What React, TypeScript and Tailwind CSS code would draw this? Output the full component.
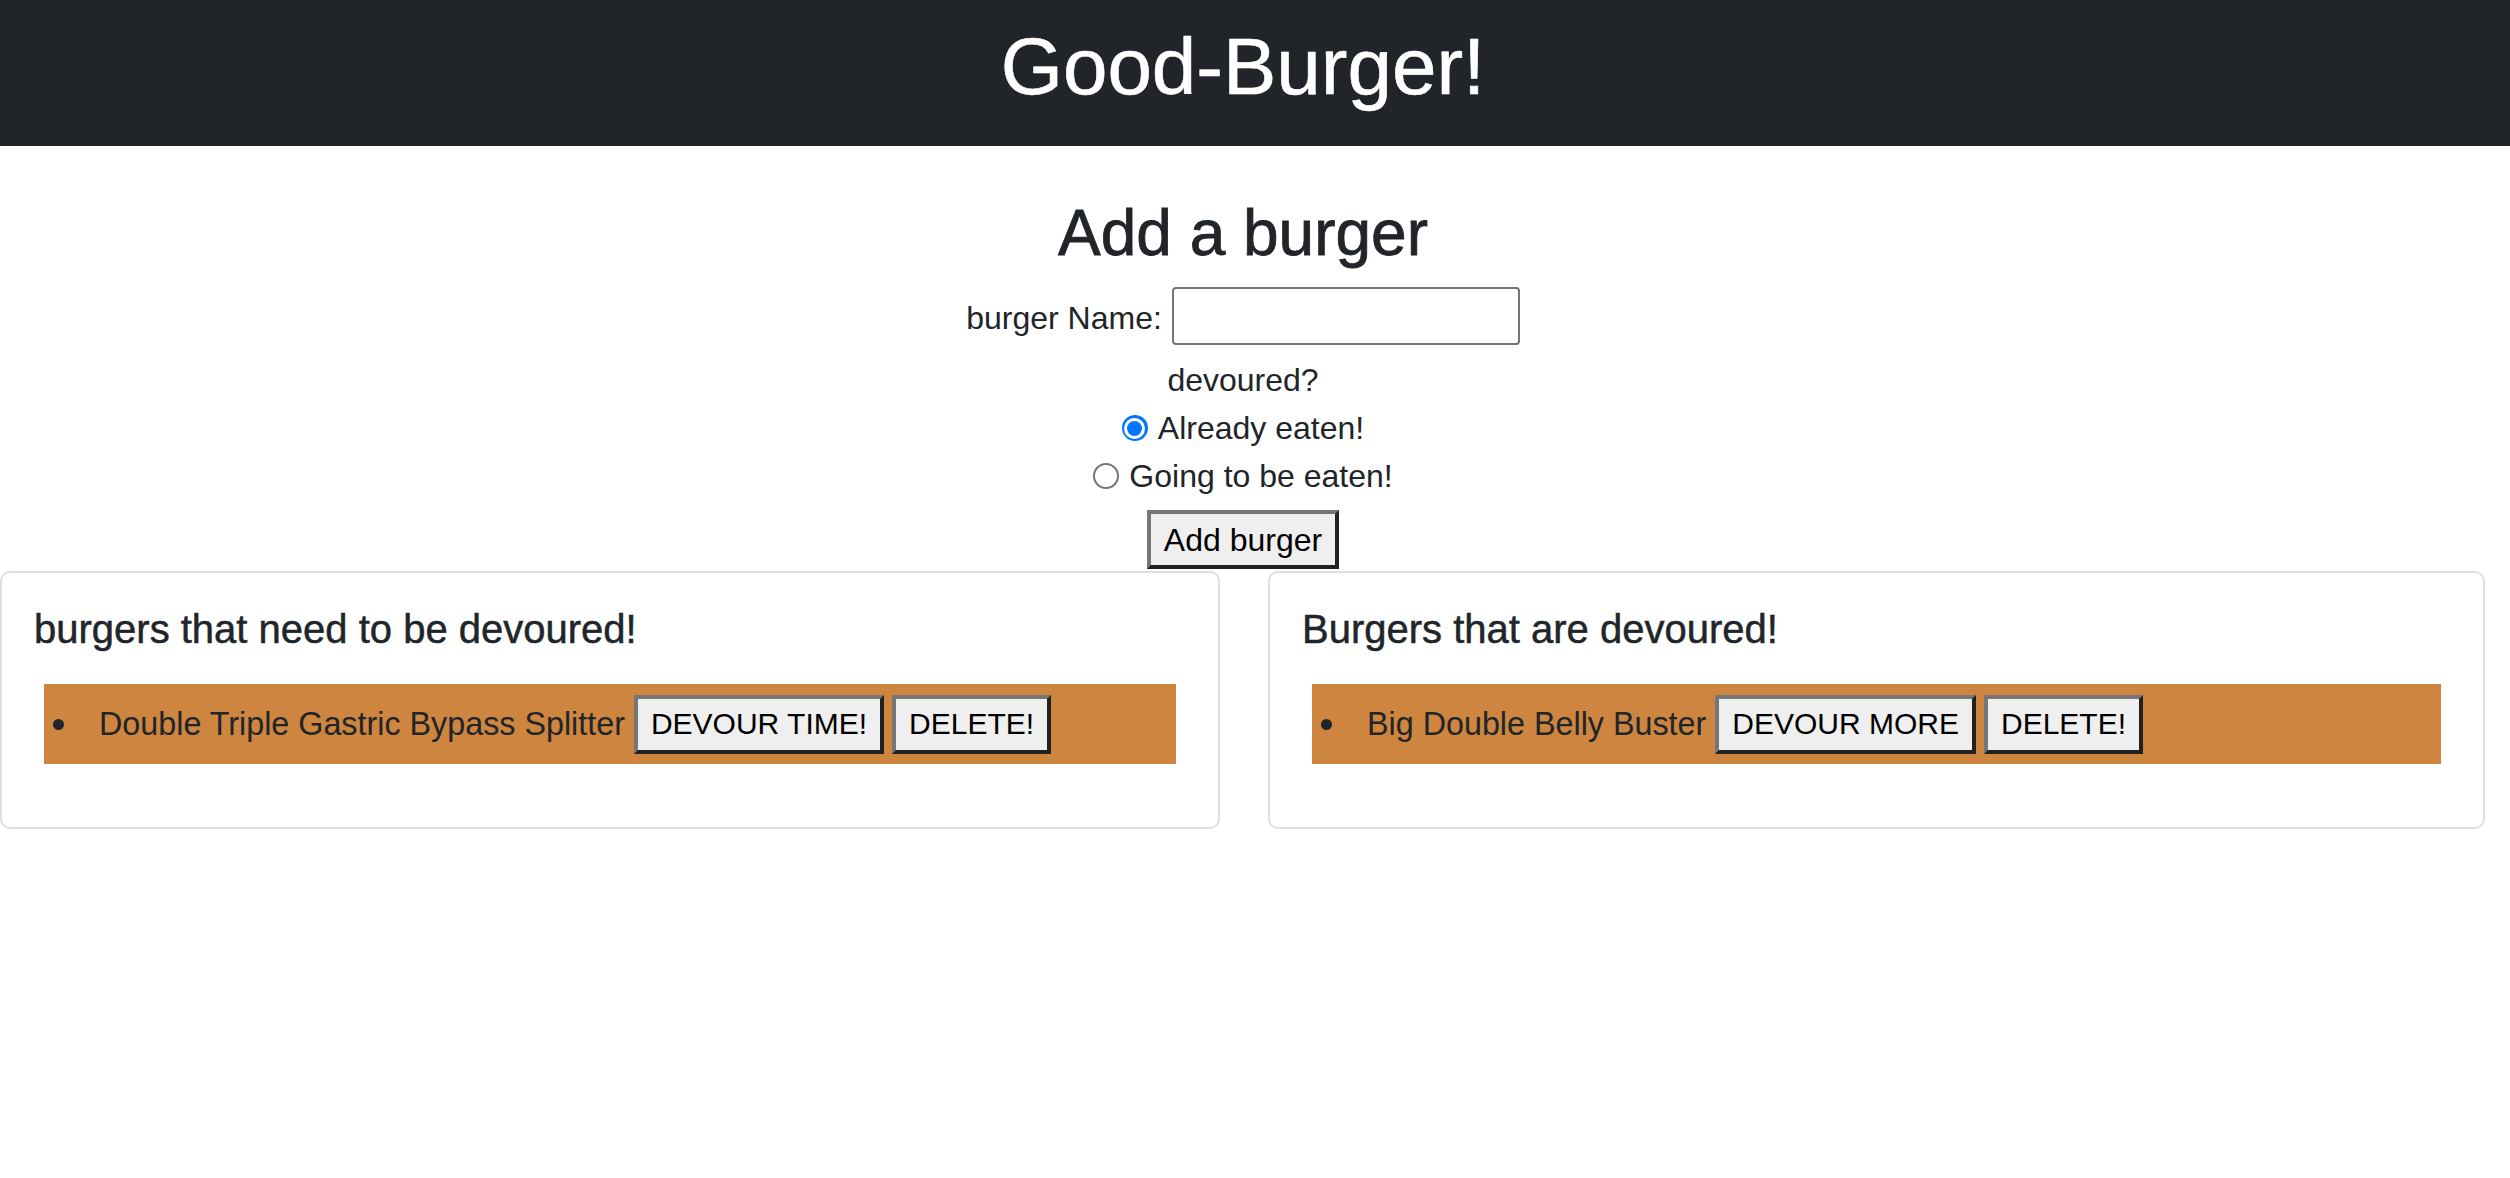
import React from "react";

function Btn({ children, className = "", big = false }: { children: React.ReactNode; className?: string; big?: boolean }) {
  return (
    <button
      type="button"
      className={
        (big ? "text-[32px] " : "text-[30px] ") +
        "inline-flex items-center justify-center h-[59px] px-[13px] bg-[#efefef] text-black leading-none border-[4px] border-t-[#767676] border-l-[#767676] border-r-[#212121] border-b-[#212121] " +
        className
      }
    >
      {children}
    </button>
  );
}

function Radio({ checked }: { checked: boolean }) {
  if (checked) {
    return (
      <span className="flex items-center justify-center w-[26px] h-[26px] rounded-full bg-[#0075ff]">
        <span className="flex items-center justify-center w-[21px] h-[21px] rounded-full bg-white">
          <span className="w-[15px] h-[15px] rounded-full bg-[#0075ff]" />
        </span>
      </span>
    );
  }
  return <span className="w-[26px] h-[26px] rounded-full border-2 border-[#767676] bg-white" />;
}

function Card({ title, item, action, width }: { title: string; item: string; action: string; width: string }) {
  return (
    <div className={width + " border-2 border-[#dfdfdf] rounded-[10px] p-[32px] bg-white"}>
      <h5 className="text-[40px] leading-[48px] mb-[31px] text-[#212529] [-webkit-text-stroke:0.5px_#212529]">{title}</h5>
      <ul className="mx-[10px] mb-[31px]">
        <li className="h-[80px] bg-[#cd853f] flex items-center pl-[9px]">
          <span className="w-[11px] h-[11px] rounded-full bg-[#212529]" />
          <span className="ml-[35px] text-[32.3px] leading-[48px] text-[#212529]">{item}</span>
          <Btn className="ml-[9px]">{action}</Btn>
          <Btn className="ml-[8px]">DELETE!</Btn>
        </li>
      </ul>
    </div>
  );
}

export default function App() {
  return (
    <div className="w-full min-h-[1178px] bg-white text-[#212529] font-['Liberation_Sans',Arial,sans-serif]">
      <nav className="w-full h-[146px] bg-[#212529] pt-[19px]">
        <h1 className="w-[2486px] text-center text-white text-[80px] leading-[96px] [-webkit-text-stroke:0.6px_#ffffff]">Good-Burger!</h1>
      </nav>

      <div className="w-[2486px]">
        <form className="flex flex-col items-center">
          <h2 className="mt-[49px] text-[64px] leading-[77px] text-[#212529] [-webkit-text-stroke:0.8px_#212529]">Add a burger</h2>
          <div className="mt-[15px] flex items-center gap-[10px]">
            <label className="pt-[4px] text-[32px] leading-[48px]">burger Name:</label>
            <input
              type="text"
              className="w-[348px] h-[58px] border-2 border-[#767676] rounded-[4px] bg-white px-[8px] text-[32px] outline-none"
            />
          </div>
          <div className="mt-[11px] text-[32px] leading-[48px]">devoured?</div>
          <div className="flex items-center gap-[10px] h-[48px]">
            <Radio checked={true} />
            <span className="text-[32px] leading-[48px]">Already eaten!</span>
          </div>
          <div className="flex items-center gap-[10px] h-[48px]">
            <Radio checked={false} />
            <span className="text-[32px] leading-[48px]">Going to be eaten!</span>
          </div>
          <Btn big className="mt-[10px]">Add burger</Btn>
        </form>

        <div className="mt-[2px] flex gap-[48px]">
          <Card
            width="w-[1220px]"
            title="burgers that need to be devoured!"
            item="Double Triple Gastric Bypass Splitter"
            action="DEVOUR TIME!"
          />
          <Card
            width="w-[1217px]"
            title="Burgers that are devoured!"
            item="Big Double Belly Buster"
            action="DEVOUR MORE"
          />
        </div>
      </div>
    </div>
  );
}
